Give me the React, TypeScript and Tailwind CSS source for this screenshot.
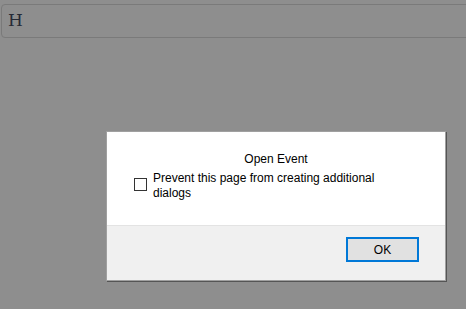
import React from "react";

export default function App() {
  return (
    <div className="relative w-[466px] h-[309px] overflow-hidden bg-[#8e8e8e]" style={{ fontFamily: '"Liberation Sans", Arial, sans-serif' }}>
      <div className="pt-[4px] pl-[1px]">
        <div className="h-[34px] w-[480px] rounded-[4px] border border-[#7a7a7a] flex items-center pl-[6px]">
          <span className="text-[17px] text-[#262a36]" style={{ fontFamily: '"DejaVu Serif", "Liberation Serif", serif' }}>H</span>
        </div>
      </div>
      <div className="absolute left-[106px] top-[131px] w-[340px] h-[150px] bg-white border border-[#a0a0a0] shadow-[1px_1px_0_0_#555] flex flex-col">
        <div className="flex-1 flex flex-col">
          <div className="text-center text-[12px] text-black mt-[20px] leading-[14px]">Open Event</div>
          <div className="flex items-start mt-[5px] pl-[27px]">
            <div className="w-[13px] h-[13px] border border-[#333] bg-white mt-[7px] shrink-0" />
            <div className="ml-[6px] text-[12px] leading-[15px] text-black w-[240px]">
              Prevent this page from creating additional dialogs
            </div>
          </div>
        </div>
        <div className="h-[55px] bg-[#f0f0f0] border-t border-[#e3e3e3] flex justify-end items-start pt-[11px] pr-[26px]">
          <button className="w-[73px] h-[25px] bg-[#e1e1e1] border-2 border-[#0078d7] text-[12px] text-black flex items-center justify-center">OK</button>
        </div>
      </div>
    </div>
  );
}
